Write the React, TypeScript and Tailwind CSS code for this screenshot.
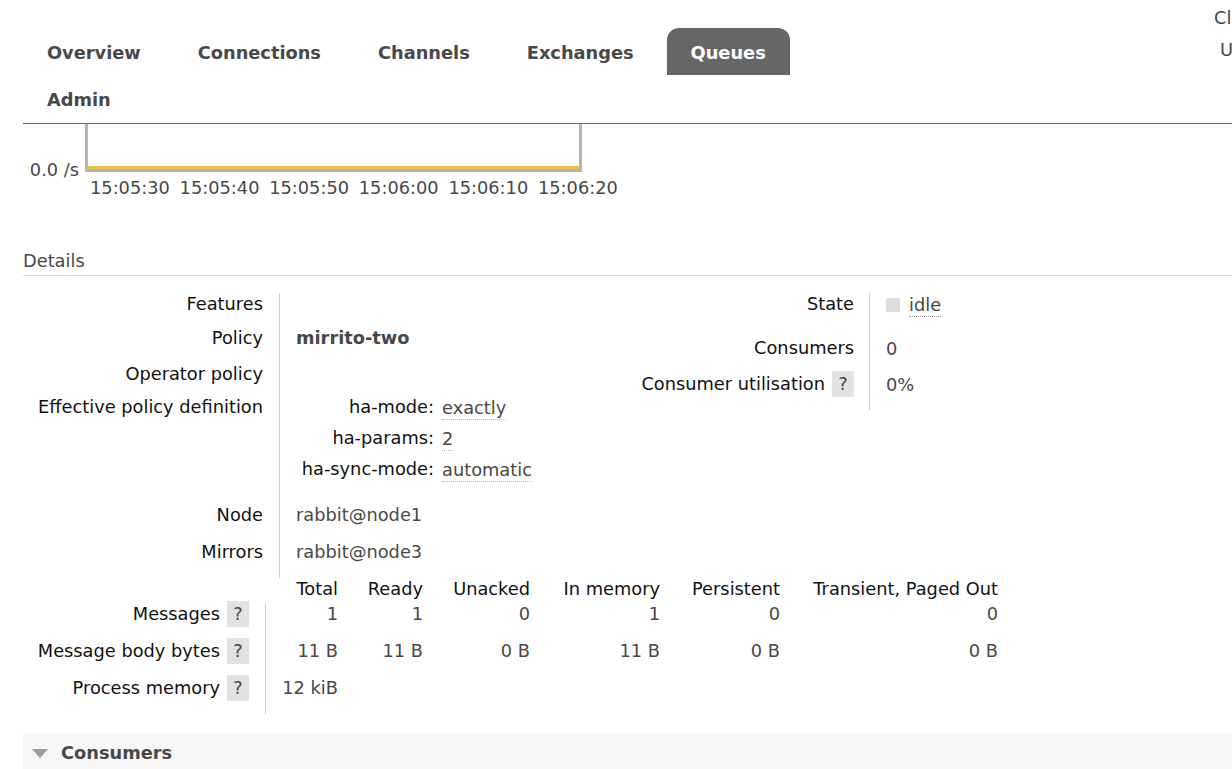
import React from "react";

const navTop = ["Overview", "Connections", "Channels", "Exchanges", "Queues"];
const ticks = ["15:05:30", "15:05:40", "15:05:50", "15:06:00", "15:06:10", "15:06:20"];

const colWidths = ["w-[72px]", "w-[85px]", "w-[107px]", "w-[130px]", "w-[120px]", "w-[218px]"];
const msgHeaders = ["Total", "Ready", "Unacked", "In memory", "Persistent", "Transient, Paged Out"];
const msgRows = [
  { label: "Messages", values: ["1", "1", "0", "1", "0", "0"] },
  { label: "Message body bytes", values: ["11 B", "11 B", "0 B", "11 B", "0 B", "0 B"] },
  { label: "Process memory", values: ["12 kiB"] },
];

const Help = () => (
  <span className="ml-[7px] flex h-[26px] w-[22px] items-center justify-center bg-[#e2e2e2] text-[#484848]">
    ?
  </span>
);

const DetailRow = ({
  label,
  height,
  children,
}: {
  label: string;
  height: string;
  children?: React.ReactNode;
}) => (
  <div className={`flex ${height}`}>
    <div className="w-[256px] shrink-0 pr-[16px] text-right text-[#111]">{label}</div>
    <div className="flex-1 border-l border-[#d0d0d0] pl-[16px]">{children}</div>
  </div>
);

export default function App() {
  return (
    <div className="relative h-[769px] w-[1232px] overflow-hidden bg-white font-['DejaVu_Sans',Verdana,sans-serif] text-[17.8px] leading-[22px] text-[#484848]">
      {/* header */}
      <header className="ml-[23px] flex h-[124px] border-b border-[#666]">
        <nav className="w-[1191px] shrink-0 pt-[28px] font-bold">
          <ul className="flex">
            {navTop.map((item) => (
              <li
                key={item}
                className={
                  item === "Queues"
                    ? "mr-[9px] flex h-[47px] items-center rounded-t-[12px] bg-[#666] px-[24px] pt-[2px] text-white"
                    : "mr-[9px] flex h-[47px] items-center px-[24px] pt-[2px]"
                }
              >
                {item}
              </li>
            ))}
          </ul>
          <ul className="flex">
            <li className="flex h-[47px] items-center px-[24px] pt-[2px]">Admin</li>
          </ul>
        </nav>
        <div className="shrink-0 whitespace-nowrap pt-[7px] text-[#444]">
          <div className="h-[32px]">Cluster rabbit@node1</div>
          <div className="ml-[6px]">User guest</div>
        </div>
      </header>

      {/* chart */}
      <div className="ml-[23px] flex">
        <div className="w-[62px] shrink-0 pr-[6px] pt-[35px] text-right">0.0 /s</div>
        <div>
          <svg width="497" height="48" className="block">
            <rect x="0" y="0" width="3" height="48" fill="#b4b4b4" />
            <rect x="494" y="0" width="3" height="48" fill="#b4b4b4" />
            <rect x="0" y="45" width="497" height="3" fill="#b4b4b4" />
            <rect x="3" y="42" width="491" height="3" fill="#e8c24a" />
          </svg>
          <div className="mt-[5px] flex">
            {ticks.map((t) => (
              <span key={t} className="w-[89.6px] shrink-0 whitespace-nowrap pl-[5px]">
                {t}
              </span>
            ))}
          </div>
        </div>
      </div>

      {/* details heading */}
      <h2 className="ml-[23px] mt-[51px] border-b border-[#ddd] pb-[3px] text-[#484848]">Details</h2>

      <div className="ml-[23px] mt-[17px] flex">
        {/* left table */}
        <div className="w-[560px] shrink-0">
          <DetailRow label="Features" height="h-[34px]" />
          <DetailRow label="Policy" height="h-[36px]">
            <span className="font-bold">mirrito-two</span>
          </DetailRow>
          <DetailRow label="Operator policy" height="h-[33px]" />
          <DetailRow label="Effective policy definition" height="h-[108px]">
            {[
              ["ha-mode:", "exactly"],
              ["ha-params:", "2"],
              ["ha-sync-mode:", "automatic"],
            ].map(([k, v]) => (
              <div key={k} className="flex h-[31px]">
                <span className="w-[138px] text-right text-[#111]">{k}</span>
                <span className="ml-[8px] mt-[1px] h-[23px] border-b border-dotted border-[#bbb]">{v}</span>
              </div>
            ))}
          </DetailRow>
          <DetailRow label="Node" height="h-[37px]">
            rabbit@node1
          </DetailRow>
          <DetailRow label="Mirrors" height="h-[37px]">
            rabbit@node3
          </DetailRow>
        </div>

        {/* right table */}
        <div className="shrink-0">
          <div className="flex h-[44px]">
            <div className="w-[286px] pr-[15px] text-right text-[#111]">State</div>
            <div className="flex items-start border-l border-[#d0d0d0] pl-[16px]">
              <span className="mt-[5px] h-[14px] w-[14px] bg-[#ddd]" />
              <span className="ml-[9px] mt-[1px] h-[23px] border-b border-dotted border-[#999]">idle</span>
            </div>
          </div>
          <div className="flex h-[34px]">
            <div className="w-[286px] pr-[15px] text-right text-[#111]">Consumers</div>
            <div className="border-l border-[#d0d0d0] pl-[16px] pt-[1px]">0</div>
          </div>
          <div className="flex h-[39px]">
            <div className="flex w-[286px] items-start justify-end pr-[15px] text-[#111]">
              <span className="leading-[26px]">Consumer utilisation</span>
              <Help />
            </div>
            <div className="border-l border-[#d0d0d0] pl-[16px] pt-[3px]">0%</div>
          </div>
        </div>
      </div>

      {/* messages table */}
      <div className="ml-[23px]">
        <div className="flex h-[23px]">
          <div className="w-[243px] shrink-0" />
          {msgHeaders.map((h, i) => (
            <div key={h} className={`${colWidths[i]} shrink-0 whitespace-nowrap text-right text-[#111]`}>
              {h}
            </div>
          ))}
        </div>
        <div className="flex">
          <div className="w-[242px] shrink-0 pr-[16px]">
            {msgRows.map((r) => (
              <div key={r.label} className="flex h-[37px] items-start justify-end text-[#111]">
                <span className="leading-[26px]">{r.label}</span>
                <Help />
              </div>
            ))}
          </div>
          <div className="mt-[3px] h-[110px] border-l border-[#d0d0d0]">
            {msgRows.map((r) => (
              <div key={r.label} className="-mt-[3px] mb-[3px] flex h-[37px] items-start">
                {r.values.map((v, i) => (
                  <div key={i} className={`${colWidths[i]} shrink-0 whitespace-nowrap text-right leading-[26px]`}>
                    {v}
                  </div>
                ))}
              </div>
            ))}
          </div>
        </div>
      </div>

      {/* consumers section */}
      <div className="ml-[23px] mt-[19px] flex h-[50px] items-start bg-[#f6f6f6] pl-[9px] pt-[10px]">
        <svg width="16" height="9" className="mt-[6px]">
          <polygon points="0,0 16,0 8,9" fill="#9a9a9a" />
        </svg>
        <span className="ml-[13px] font-bold leading-[20px] text-[#484848]">Consumers</span>
      </div>
    </div>
  );
}
